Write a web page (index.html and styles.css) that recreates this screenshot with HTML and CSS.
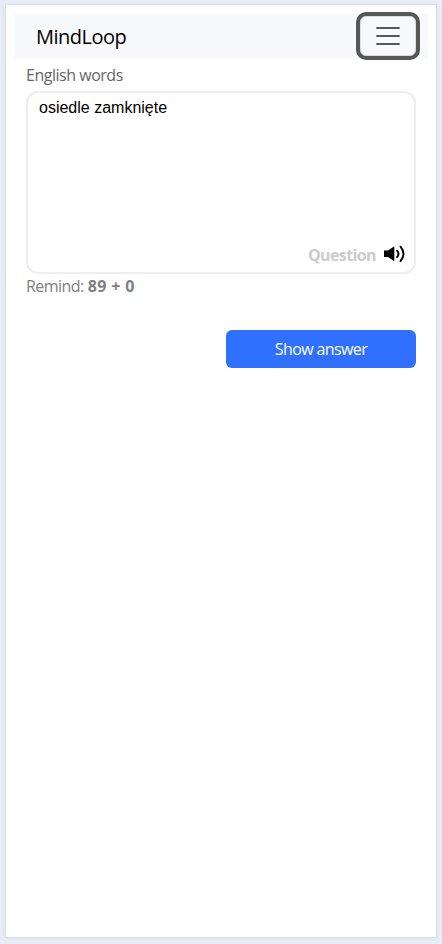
FILE: index.html
```html
<!DOCTYPE html>
<html lang="en">
<head>
<meta charset="utf-8">
<title>MindLoop</title>
<link rel="stylesheet" href="styles.css">
</head>
<body>
<div class="app">
  <nav class="navbar">
    <span class="brand">MindLoop</span>
    <button class="toggler" aria-label="Menu">
      <svg width="30" height="30" viewBox="0 0 30 30"><path d="M4 7h22M4 15h22M4 23h22" fill="none" stroke="#57595b" stroke-width="2" stroke-linecap="round"/></svg>
    </button>
  </nav>
  <main class="content">
    <div class="deck"><span class="deck-text">English words</span></div>
    <section class="card">
      <div class="word">osiedle zamknięte</div>
      <div class="card-footer">
        <span class="side">Question</span>
        <svg class="speaker" width="21" height="18" viewBox="0 0 21 18"><path d="M0 5.5h4L10.3 1.3v15L4 12H0z"/><path d="M13.1 5.8q2.8 3 0 6.2M16.5 1.7q6 7 0 14.4" fill="none" stroke="#000" stroke-width="1.9" stroke-linecap="round"/></svg>
      </div>
    </section>
    <div class="remind"><span class="remind-label">Remind:</span> <b>89 + 0</b></div>
    <div class="actions"><button class="answer"><span>Show answer</span></button></div>
  </main>
</div>
</body>
</html>
```
FILE: styles.css
```css
* { box-sizing: border-box; }
body {
  margin: 0;
  height: 944px;
  padding: 4px 5px 6px;
  background: #e9eef6;
  font: 16px/24px "Open Sans", "Noto Sans", sans-serif;
  overflow: hidden;
}
.app {
  height: 934px;
  padding: 8px;
  background: #fff;
  border: 1px solid #dadfe7;
  box-shadow: 0 1px 5px rgba(40, 60, 100, .07);
}
.navbar {
  display: flex;
  align-items: center;
  justify-content: space-between;
  height: 46px;
  padding: 0 12px 0 22px;
  background: #f8f9fb;
}
.brand { padding-top: 2px; font-size: 20px; line-height: 30px; letter-spacing: -.5px; color: #000; }
.toggler {
  display: flex;
  align-items: center;
  justify-content: center;
  width: 56px;
  height: 40px;
  padding: 0;
  background: #f8f9fb;
  border: 1px solid #dcddde;
  border-radius: 6px;
  box-shadow: 0 0 0 4px #575757;
}
.content { padding: 4px 12px 0; }
.deck { height: 28px; color: #666; }
.deck-text { letter-spacing: -.48px; }
.card {
  display: flex;
  flex-direction: column;
  justify-content: space-between;
  height: 183px;
  padding: 3px 9px 5px 11px;
  border: 2px solid #eee;
  border-radius: 12px;
}
.word { font-family: "Liberation Sans", Arial, sans-serif; color: #000; }
.card-footer { display: flex; align-items: center; justify-content: flex-end; gap: 8px; }
.side { font-weight: 700; color: #ccc; letter-spacing: -.6px; }
.speaker { display: block; margin-top: -3px; }
.remind { height: 56px; color: #808080; }
.remind-label { letter-spacing: -.55px; }
.remind b { letter-spacing: .35px; }
.actions { display: flex; justify-content: flex-end; }
.answer {
  width: 190px;
  height: 38px;
  padding: 0;
  border: 0;
  border-radius: 6px;
  background: #2f70ff;
  color: #fff;
  font: inherit;
  letter-spacing: -.6px;
}
```
